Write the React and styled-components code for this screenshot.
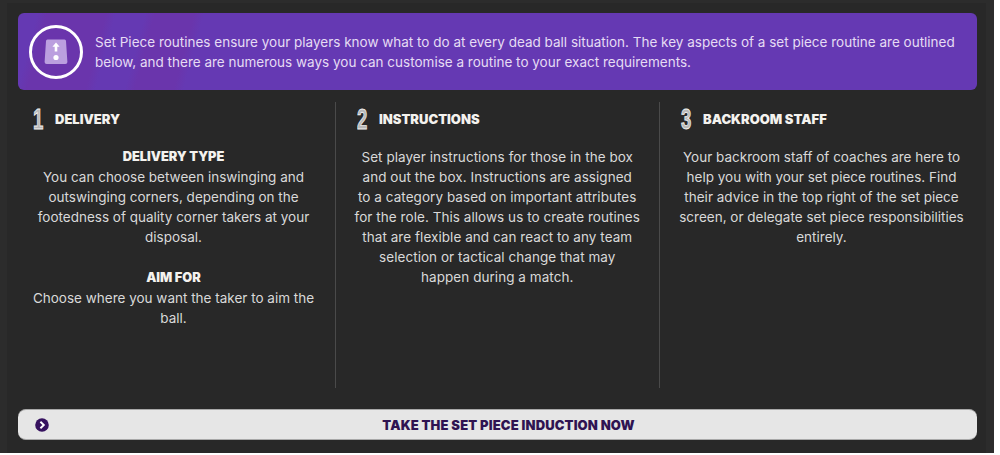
import React from 'react';
import styled, { createGlobalStyle } from 'styled-components';

const GlobalStyle = createGlobalStyle`
  html, body {
    margin: 0;
    padding: 0;
    background: #ffffff;
  }
  body {
    font-family: Inter, "Liberation Sans", sans-serif;
  }
`;

const Screen = styled.div`
  width: 994px;
  height: 453px;
  box-sizing: border-box;
  padding: 13px 17px 13px 18px;
  background: #282828;
  box-shadow: inset 7px 0 0 #2c2c2c, inset -8px 0 0 #2c2c2c, inset 0 3px 0 #2c2c2c;
  display: flex;
  flex-direction: column;
`;

const Banner = styled.div`
  height: 77px;
  flex: none;
  box-sizing: border-box;
  padding: 0 18px 0 11px;
  display: flex;
  align-items: center;
  gap: 12px;
  border-radius: 6px;
  background:
    linear-gradient(105deg, transparent 2%, #6a35ac 3%, #6a35ac 9%, transparent 10%, transparent 13%, #6a35ac 14%, #6a35ac 18%, transparent 19%),
    #6539b3;
`;

const BannerIcon = styled.svg`
  width: 54px;
  height: 54px;
  flex: none;
`;

const BannerText = styled.p`
  margin: 0;
  color: #e6dcf4;
  font-size: 13.5px;
  line-height: 20px;
`;

const Columns = styled.div`
  flex: 1;
  min-height: 0;
  margin-top: 12px;
  display: grid;
  grid-template-columns: 318px 324px 1fr;
`;

const Column = styled.section`
  box-sizing: border-box;
  padding: 0 ${p => p.$right}px 0 ${p => p.$left}px;
  height: 286px;
  border-right: ${p => (p.$last ? 'none' : '1px solid #4a4a4a')};
`;

const Heading = styled.header`
  height: 34px;
  display: flex;
  align-items: center;
  gap: 9px;
  padding-left: ${p => p.$indent}px;
`;

const Numeral = styled.span`
  width: 13px;
  font-family: "Liberation Sans", sans-serif;
  font-size: 30px;
  font-weight: 700;
  line-height: 1;
  color: #b8b8b8;
  -webkit-text-stroke: 0.9px #f0f0f0;
  transform: scaleX(0.62);
  transform-origin: left center;
`;

const Title = styled.h2`
  margin: 0;
  font-size: 13px;
  font-weight: 900;
  color: #f4f2ee;
`;

const Body = styled.div`
  margin-top: 11px;
  text-align: center;
  color: #d9d9d9;
  font-size: 13.5px;
  letter-spacing: ${p => p.$spacing || 0}px;
  line-height: 20px;
`;

const Label = styled.h3`
  margin: 0;
  font-size: 12.8px;
  font-weight: 900;
  line-height: 20px;
  color: #f4f2ee;
`;

const Paragraph = styled.p`
  margin: 0 0 ${p => p.$gap || 0}px;
`;

const Induction = styled.button`
  height: 31px;
  flex: none;
  margin-top: 11px;
  padding: 0 0 0 22px;
  position: relative;
  border: 0;
  border-top: 1px solid #a8a8a8;
  border-bottom: 1px solid #a8a8a8;
  border-radius: 8px;
  background: #e6e6e6;
  color: #2f1452;
  font-family: inherit;
  font-size: 13px;
  font-weight: 900;
  letter-spacing: 0.15px;
  text-align: center;
`;

const Chevron = styled.svg`
  position: absolute;
  left: 17px;
  top: 8px;
  width: 14px;
  height: 14px;
`;

export default function App() {
  return (
    <>
      <GlobalStyle />
      <Screen>
        <Banner>
          <BannerIcon viewBox="0 0 54 54">
            <circle cx="27" cy="27" r="25.5" fill="none" stroke="#fff" strokeWidth="3" />
            <path d="M18.5 14.5h17a1.5 1.5 0 0 1 1.5 1.5l1.4 21a2 2 0 0 1-2 2H17.6a2 2 0 0 1-2-2l1.4-21a1.5 1.5 0 0 1 1.5-1.5z" fill="#bb9fdf" />
            <path d="M27 17.5l3.6 4.2h-2.3v4.8h-2.6v-4.8h-2.3z" fill="#fff" />
            <circle cx="27" cy="32.5" r="2.6" fill="#fff" />
          </BannerIcon>
          <BannerText>
            Set Piece routines ensure your players know what to do at every dead ball situation. The key aspects of a set piece routine are outlined below, and there are numerous ways you can customise a routine to your exact requirements.
          </BannerText>
        </Banner>
        <Columns>
          <Column $left={13} $right={19}>
            <Heading $indent={2}>
              <Numeral>1</Numeral>
              <Title>DELIVERY</Title>
            </Heading>
            <Body>
              <Label>DELIVERY TYPE</Label>
              <Paragraph $gap={21}>
                You can choose between inswinging and outswinging corners, depending on the footedness of quality corner takers at your disposal.
              </Paragraph>
              <Label>AIM FOR</Label>
              <Paragraph>Choose where you want the taker to aim the ball.</Paragraph>
            </Body>
          </Column>
          <Column $left={18.5} $right={19}>
            <Heading $indent={2.5}>
              <Numeral>2</Numeral>
              <Title>INSTRUCTIONS</Title>
            </Heading>
            <Body $spacing={0.05}>
              <Paragraph>
                Set player instructions for those in the box and out the box. Instructions are assigned to a category based on important attributes for the role. This allows us to create routines that are flexible and can react to any team selection or tactical change that may happen during a match.
              </Paragraph>
            </Body>
          </Column>
          <Column $last $left={18} $right={12}>
            <Heading $indent={3}>
              <Numeral>3</Numeral>
              <Title>BACKROOM STAFF</Title>
            </Heading>
            <Body>
              <Paragraph>
                Your backroom staff of coaches are here to help you with your set piece routines. Find their advice in the top right of the set piece screen, or delegate set piece responsibilities entirely.
              </Paragraph>
            </Body>
          </Column>
        </Columns>
        <Induction>
          <Chevron viewBox="0 0 14 14">
            <circle cx="7" cy="7" r="6.8" fill="#36125f" />
            <path d="M5.4 3.8L8.8 7l-3.4 3.2" fill="none" stroke="#fff" strokeWidth="1.9" />
          </Chevron>
          TAKE THE SET PIECE INDUCTION NOW
        </Induction>
      </Screen>
    </>
  );
}
